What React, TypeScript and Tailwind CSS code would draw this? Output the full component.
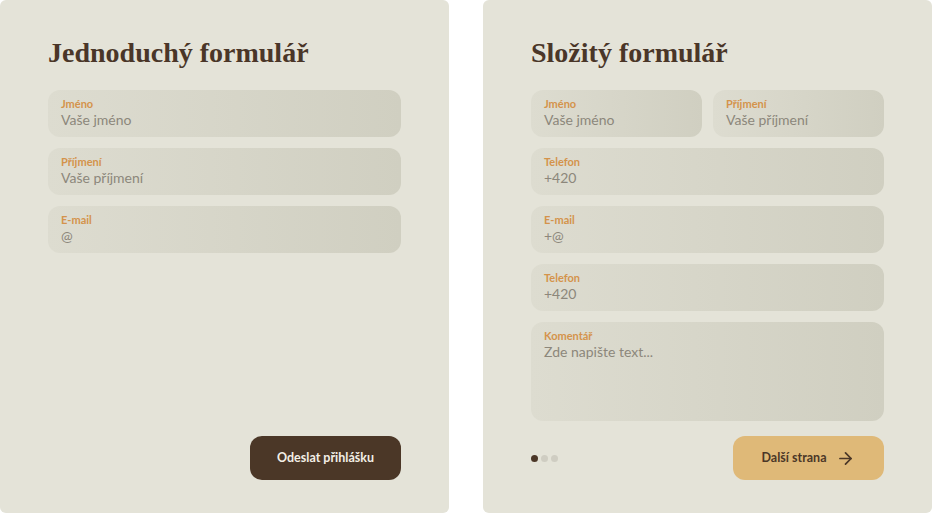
import { ArrowRight } from 'lucide-react'

const sans = { fontFamily: 'Lato, "Noto Sans", sans-serif' }

interface FieldProps {
  label: string
  placeholder: string
  tall?: boolean
  className?: string
}

function Field({ label, placeholder, tall, className = '' }: FieldProps) {
  return (
    <div
      className={`flex flex-col rounded-[12px] bg-gradient-to-r from-[#dddcd0] to-[#d0cfc1] px-[13px] pt-[7px] ${
        tall ? 'h-[99px]' : 'h-[47px]'
      } ${className}`}
    >
      <span className="text-[11px] font-bold leading-[13px] text-[#d4934b]">{label}</span>
      <span className="text-[14px] leading-[20px] text-[#8c877b]">{placeholder}</span>
    </div>
  )
}

function Card({ title, children, footer }: { title: string; children: React.ReactNode; footer: React.ReactNode }) {
  return (
    <div className="flex h-[513px] w-[449px] shrink-0 flex-col rounded-[6px] bg-[#e4e3d8] px-12 pb-[33px] pt-[36px]">
      <h2
        className="mb-[20px] text-[28px] font-bold leading-[34px] text-[#4a3628]"
        style={{ fontFamily: '"Liberation Serif", serif' }}
      >
        {title}
      </h2>
      <div className="flex flex-col gap-[11px]">{children}</div>
      <div className="mt-auto flex items-center justify-between">{footer}</div>
    </div>
  )
}

export default function App() {
  return (
    <div className="flex h-[513px] w-[932px] gap-[34px] overflow-hidden bg-white" style={sans}>
      <Card
        title="Jednoduchý formulář"
        footer={
          <>
            <span />
            <button className="h-[44px] w-[151px] rounded-[12px] bg-[#4b3727] text-[12.5px] font-bold text-[#f3efe6]">
              Odeslat přihlášku
            </button>
          </>
        }
      >
        <Field label="Jméno" placeholder="Vaše jméno" />
        <Field label="Příjmení" placeholder="Vaše příjmení" />
        <Field label="E-mail" placeholder="@" />
      </Card>

      <Card
        title="Složitý formulář"
        footer={
          <>
            <div className="flex items-center gap-[3px]">
              <span className="size-[7px] rounded-full bg-[#4b3727]" />
              <span className="size-[7px] rounded-full bg-[#cfcdc2]" />
              <span className="size-[7px] rounded-full bg-[#cfcdc2]" />
            </div>
            <button className="flex h-[44px] w-[151px] items-center justify-center gap-[10px] rounded-[12px] bg-[#dfb978] text-[12.5px] font-bold text-[#4b3727]">
              Další strana
              <ArrowRight size={19} strokeWidth={2.2} />
            </button>
          </>
        }
      >
        <div className="flex gap-[11px]">
          <Field label="Jméno" placeholder="Vaše jméno" className="flex-1" />
          <Field label="Příjmení" placeholder="Vaše příjmení" className="flex-1" />
        </div>
        <Field label="Telefon" placeholder="+420" />
        <Field label="E-mail" placeholder="+@" />
        <Field label="Telefon" placeholder="+420" />
        <Field label="Komentář" placeholder="Zde napište text..." tall />
      </Card>
    </div>
  )
}
